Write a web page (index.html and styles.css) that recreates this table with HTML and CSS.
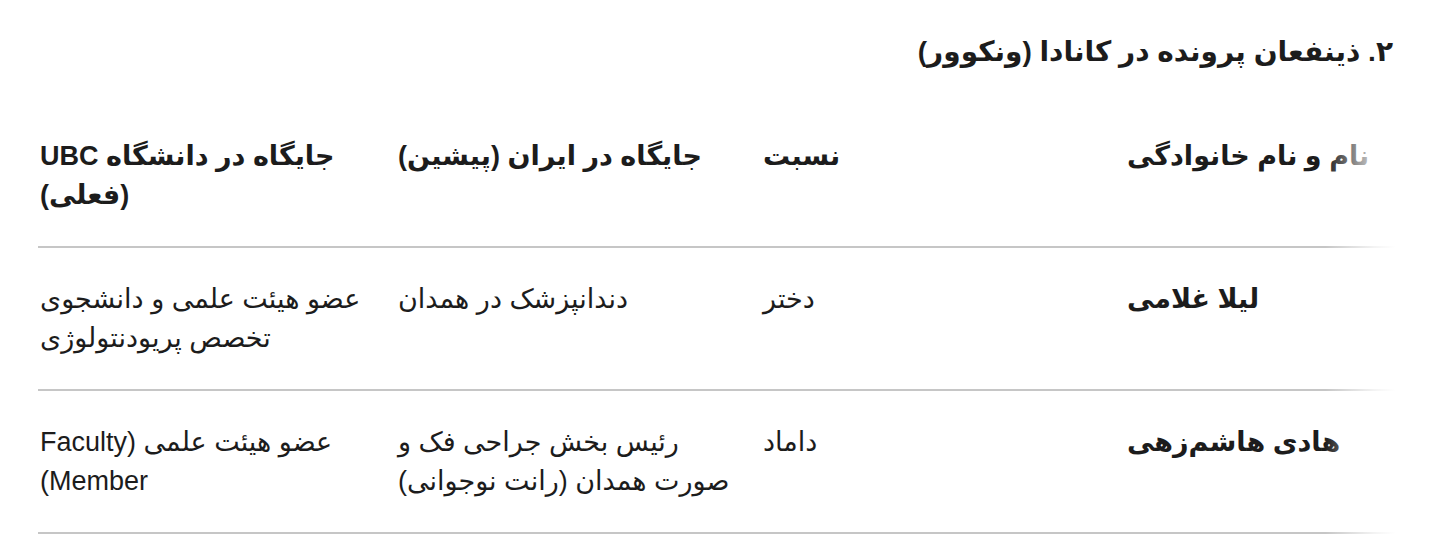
FILE: index.html
```html
<!DOCTYPE html>
<html lang="fa">
<head>
<meta charset="utf-8">
<title>ذینفعان پرونده در کانادا</title>
<link rel="stylesheet" href="styles.css">
</head>
<body>
<main class="page" dir="rtl">
  <h2 class="title">۲. ذینفعان پرونده در کانادا (ونکوور)</h2>
  <div class="table-wrap">
    <table class="people">
      <colgroup>
        <col class="c-name">
        <col class="c-rel">
        <col class="c-iran">
        <col class="c-ubc">
      </colgroup>
      <thead>
        <tr>
          <th>نام و نام خانوادگی</th>
          <th>نسبت</th>
          <th>جایگاه در ایران (پیشین)</th>
          <th>جایگاه در دانشگاه UBC (فعلی)</th>
        </tr>
      </thead>
      <tbody>
        <tr>
          <td class="name">لیلا غلامی</td>
          <td>دختر</td>
          <td>دندانپزشک در همدان</td>
          <td>عضو هیئت علمی و دانشجوی تخصص پریودنتولوژی</td>
        </tr>
        <tr>
          <td class="name">هادی هاشم‌زهی</td>
          <td>داماد</td>
          <td>رئیس بخش جراحی فک و صورت همدان (رانت نوجوانی)</td>
          <td>عضو هیئت علمی (Faculty Member)</td>
        </tr>
      </tbody>
    </table>
  </div>
</main>
</body>
</html>
```

FILE: styles.css
```css
html, body {
  margin: 0;
  padding: 0;
  background: #ffffff;
}

body {
  font-family: "Liberation Sans", "DejaVu Sans", sans-serif;
  color: #1c1c1c;
}

.page {
  margin: 0 61px 0 38px;
  padding-top: 32px;
}

.title {
  margin: 0 2px 34px 0;
  font-size: 28px;
  line-height: 39px;
  font-weight: 700;
  text-align: right;
}

.table-wrap {
  position: relative;
}

.table-wrap::after {
  content: "";
  position: absolute;
  top: 0;
  bottom: 0;
  right: 0;
  width: 70px;
  background: linear-gradient(to left, #ffffff 0%, rgba(255, 255, 255, 0.8) 30%, rgba(255, 255, 255, 0) 100%);
  pointer-events: none;
}

.people {
  width: 100%;
  border-collapse: collapse;
  table-layout: fixed;
}

.c-name { width: 270px; }
.c-rel { width: 364px; }
.c-iran { width: 365px; }
.c-ubc { width: 358px; }

.people th,
.people td {
  text-align: left;
  vertical-align: top;
  font-size: 27px;
  line-height: 39px;
  padding: 32px 24px 31px 2px;
  border-bottom: 2px solid #c6c6c6;
}

.people th {
  font-weight: 700;
}

.people td {
  font-weight: 400;
}

.people td.name {
  font-weight: 700;
}
```
